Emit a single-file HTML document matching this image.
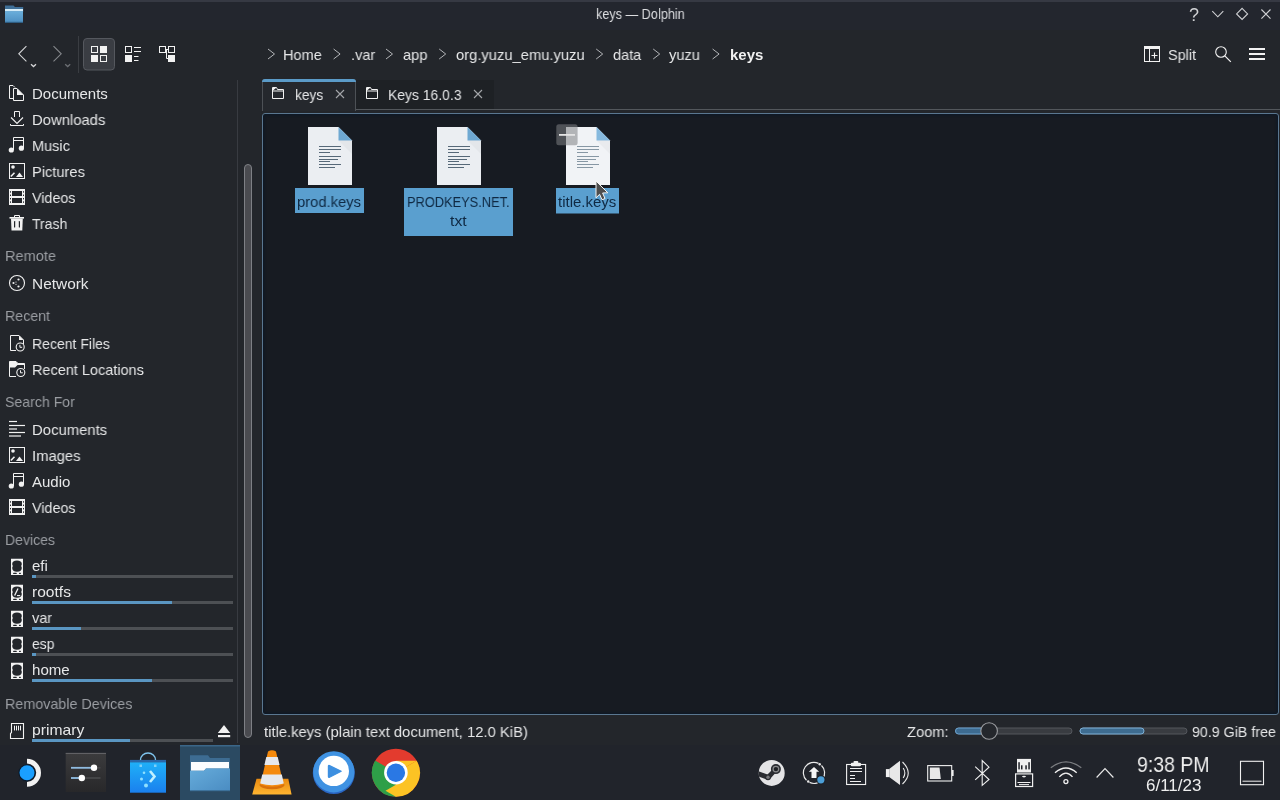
<!DOCTYPE html>
<html><head><meta charset="utf-8"><style>
*{margin:0;padding:0;box-sizing:border-box}
html,body{width:1280px;height:800px;overflow:hidden;background:#23262b;font-family:"Liberation Sans",sans-serif}
.a{position:absolute}
.t{position:absolute;white-space:nowrap;line-height:1;transform-origin:0 0;will-change:transform}
svg{position:absolute;overflow:visible}
.bar{position:absolute;left:32px;height:3px;background:#4d5054}
.bar i{position:absolute;left:0;top:0;height:3px;background:#5a96c2}
</style></head><body>
<div class="a" style="left:0;top:0;width:1280px;height:30px;background:#23262e"></div>
<div class="a" style="left:0;top:0;width:1280px;height:1.5px;background:#363943"></div>
<div class="t" style="left:595.50px;top:6.63px;font-size:14.5px;color:#dcdde0;transform:scaleX(0.8735);">keys — Dolphin</div>
<div class="t" style="left:32.10px;top:86.30px;font-size:15px;color:#e6e7e8;transform:scaleX(0.9941);">Documents</div>
<div class="t" style="left:32.10px;top:112.30px;font-size:15px;color:#e6e7e8;transform:scaleX(0.9892);">Downloads</div>
<div class="t" style="left:32.10px;top:138.30px;font-size:15px;color:#e6e7e8;transform:scaleX(0.9681);">Music</div>
<div class="t" style="left:32.10px;top:164.30px;font-size:15px;color:#e6e7e8;transform:scaleX(0.9760);">Pictures</div>
<div class="t" style="left:32.10px;top:190.30px;font-size:15px;color:#e6e7e8;transform:scaleX(0.9539);">Videos</div>
<div class="t" style="left:32.10px;top:216.30px;font-size:15px;color:#e6e7e8;transform:scaleX(0.9339);">Trash</div>
<div class="t" style="left:5.00px;top:248.30px;font-size:15px;color:#9a9da2;transform:scaleX(0.9695);">Remote</div>
<div class="t" style="left:32.10px;top:276.30px;font-size:15px;color:#e6e7e8;transform:scaleX(1.0282);">Network</div>
<div class="t" style="left:5.00px;top:308.30px;font-size:15px;color:#9a9da2;transform:scaleX(0.9464);">Recent</div>
<div class="t" style="left:32.10px;top:336.30px;font-size:15px;color:#e6e7e8;transform:scaleX(0.9346);">Recent Files</div>
<div class="t" style="left:32.10px;top:362.30px;font-size:15px;color:#e6e7e8;transform:scaleX(0.9646);">Recent Locations</div>
<div class="t" style="left:5.00px;top:394.30px;font-size:15px;color:#9a9da2;transform:scaleX(0.9407);">Search For</div>
<div class="t" style="left:32.10px;top:422.30px;font-size:15px;color:#e6e7e8;transform:scaleX(0.9914);">Documents</div>
<div class="t" style="left:32.10px;top:448.30px;font-size:15px;color:#e6e7e8;transform:scaleX(0.9858);">Images</div>
<div class="t" style="left:32.10px;top:474.30px;font-size:15px;color:#e6e7e8;transform:scaleX(0.9935);">Audio</div>
<div class="t" style="left:32.10px;top:500.30px;font-size:15px;color:#e6e7e8;transform:scaleX(0.9561);">Videos</div>
<div class="t" style="left:5.00px;top:532.30px;font-size:15px;color:#9a9da2;transform:scaleX(0.9372);">Devices</div>
<div class="t" style="left:32.10px;top:558.30px;font-size:15px;color:#e6e7e8;transform:scaleX(0.9779);">efi</div>
<div class="t" style="left:32.10px;top:584.30px;font-size:15px;color:#e6e7e8;transform:scaleX(1.0373);">rootfs</div>
<div class="t" style="left:32.10px;top:610.30px;font-size:15px;color:#e6e7e8;transform:scaleX(0.9688);">var</div>
<div class="t" style="left:32.10px;top:636.30px;font-size:15px;color:#e6e7e8;transform:scaleX(0.9298);">esp</div>
<div class="t" style="left:32.10px;top:662.30px;font-size:15px;color:#e6e7e8;transform:scaleX(1.0053);">home</div>
<div class="t" style="left:5.00px;top:696.30px;font-size:15px;color:#9a9da2;transform:scaleX(0.9550);">Removable Devices</div>
<div class="t" style="left:32.10px;top:722.30px;font-size:15px;color:#e6e7e8;transform:scaleX(1.0460);">primary</div>
<div class="a" style="left:237px;top:80px;width:1px;height:663px;background:#383b41"></div>
<div class="a" style="left:244px;top:164px;width:8px;height:574px;background:#4a4b50;border:1px solid #7e8085;border-radius:4px"></div>
<div class="bar" style="top:575px;width:201px"><i style="width:4px"></i></div>
<div class="bar" style="top:601px;width:201px"><i style="width:140px"></i></div>
<div class="bar" style="top:627px;width:201px"><i style="width:49px"></i></div>
<div class="bar" style="top:653px;width:201px"><i style="width:4px"></i></div>
<div class="bar" style="top:679px;width:201px"><i style="width:120px"></i></div>
<div class="bar" style="top:739px;width:181px"><i style="width:98px"></i></div>
<div class="t" style="left:283.00px;top:47.30px;font-size:15px;color:#e6e7e8;transform:scaleX(0.9675);">Home</div>
<div class="t" style="left:350.60px;top:47.30px;font-size:15px;color:#e6e7e8;transform:scaleX(0.9680);">.var</div>
<div class="t" style="left:402.50px;top:47.30px;font-size:15px;color:#e6e7e8;transform:scaleX(0.9741);">app</div>
<div class="t" style="left:455.50px;top:47.30px;font-size:15px;color:#e6e7e8;transform:scaleX(0.9832);">org.yuzu_emu.yuzu</div>
<div class="t" style="left:612.70px;top:47.30px;font-size:15px;color:#e6e7e8;transform:scaleX(0.9692);">data</div>
<div class="t" style="left:669.00px;top:47.30px;font-size:15px;color:#e6e7e8;transform:scaleX(0.9779);">yuzu</div>
<div class="t" style="left:730.00px;top:47.30px;font-size:15px;color:#f0f0f0;font-weight:bold;transform:scaleX(0.9895);">keys</div>
<div class="t" style="left:1167.50px;top:47.30px;font-size:15px;color:#e6e7e8;transform:scaleX(0.9623);">Split</div>
<div class="a" style="left:262px;top:79px;width:94px;height:32px;background:#25282d;border:1px solid #4d5156;border-bottom:none;border-radius:3px 3px 0 0"></div>
<div class="a" style="left:262px;top:79px;width:94px;height:3px;background:#5b9bc8;border-radius:3px 3px 0 0"></div>
<div class="a" style="left:356px;top:80px;width:138px;height:29px;background:#1e2125"></div>
<div class="a" style="left:356px;top:109px;width:924px;height:1px;background:#53575c"></div>
<div class="t" style="left:294.70px;top:87.30px;font-size:15px;color:#e6e7e8;transform:scaleX(0.9173);">keys</div>
<div class="t" style="left:388.00px;top:87.30px;font-size:15px;color:#e6e7e8;transform:scaleX(0.9280);">Keys 16.0.3</div>
<div class="a" style="left:262px;top:113px;width:1017px;height:602px;background:#171b22;border:1px solid #5a7790;border-radius:3px;box-shadow:inset 0 0 3px 1px #0c1826"></div>
<div class="t" style="left:263.70px;top:724.30px;font-size:15px;color:#e6e7e8;transform:scaleX(0.9858);">title.keys (plain text document, 12.0 KiB)</div>
<div class="t" style="left:906.80px;top:724.30px;font-size:15px;color:#e6e7e8;transform:scaleX(0.9812);">Zoom:</div>
<div class="t" style="left:1191.80px;top:724.30px;font-size:15px;color:#e6e7e8;transform:scaleX(0.9491);">90.9 GiB free</div>
<div class="a" style="left:0;top:745px;width:1280px;height:55px;background:#21242b"></div>
<div class="a" style="left:180px;top:746px;width:60px;height:54px;background:#2b4a62"></div>
<div class="t" style="left:1137.40px;top:754.25px;font-size:22.5px;color:#eeeeee;transform:scaleX(0.8663);">9:38 PM</div>
<div class="t" style="left:1145.50px;top:778.39px;font-size:15.6px;color:#eeeeee;transform:scaleX(1.0904);">6/11/23</div>
<svg width="1280" height="800" style="left:0;top:0"><path d="M13.5,98.5 H9.5 V85.5 H13 L15,87.5" fill="none" stroke="#f2f2f2"/><path d="M13.5,100.5 V88.5 H17 L23.5,95 V100.5 Z" fill="none" stroke="#f2f2f2"/><path d="M17,88.5 L23.5,95 H17 Z" fill="#f2f2f2"/><path d="M14.5,117 V111.5 H19.5 V117" fill="none" stroke="#f2f2f2"/><path d="M11,117.5 L17,123.5 L23,117.5" fill="none" stroke="#f2f2f2" stroke-width="1.1"/><path d="M10.5,124 V125.5 H23.5 V124" fill="none" stroke="#f2f2f2"/><path d="M13.5,150 V137.5 H23.5 V148" fill="none" stroke="#f2f2f2"/><path d="M13.5,140.5 H23.5" stroke="#f2f2f2"/><circle cx="11.3" cy="150" r="2.6" fill="#f2f2f2"/><circle cx="21.4" cy="148.2" r="2.6" fill="#f2f2f2"/><rect x="9.5" y="163.5" width="15" height="15" fill="none" stroke="#f2f2f2"/><circle cx="13" cy="167" r="1.8" fill="#f2f2f2"/><path d="M16,177 L19.5,172.5 L23,177 Z" fill="#f2f2f2"/><path d="M10.8,176.5 L14.5,172.8" stroke="#f2f2f2" stroke-width="1.6"/><path d="M9,189 H25 V205 H9 Z M12,191 V196 H22 V191 Z M12,198 V203 H22 V198 Z" fill="#f2f2f2" fill-rule="evenodd"/><rect x="10" y="191.2" width="1" height="1.4" fill="#23262b"/><rect x="23" y="191.2" width="1" height="1.4" fill="#23262b"/><rect x="10" y="194.6" width="1" height="1.4" fill="#23262b"/><rect x="23" y="194.6" width="1" height="1.4" fill="#23262b"/><rect x="10" y="198.0" width="1" height="1.4" fill="#23262b"/><rect x="23" y="198.0" width="1" height="1.4" fill="#23262b"/><rect x="10" y="201.4" width="1" height="1.4" fill="#23262b"/><rect x="23" y="201.4" width="1" height="1.4" fill="#23262b"/><path d="M14.5,217.5 V215.5 H19.5 V217.5" fill="none" stroke="#f2f2f2"/><rect x="9.5" y="217" width="14.5" height="1.6" fill="#f2f2f2"/><path d="M11,218.5 H22.8 L22.3,230.5 H11.5 Z" fill="#f2f2f2"/><rect x="14" y="221" width="1.2" height="6.5" rx=".6" fill="#23262b"/><rect x="18.8" y="221" width="1.2" height="6.5" rx=".6" fill="#23262b"/><circle cx="17" cy="283" r="7.5" fill="none" stroke="#f2f2f2" stroke-width="1.1"/><circle cx="18.5" cy="279.5" r="1.1" fill="#f2f2f2"/><circle cx="13.5" cy="283" r="1.1" fill="#f2f2f2"/><circle cx="18.5" cy="286.5" r="1.1" fill="#f2f2f2"/><circle cx="16" cy="282" r="0.6" fill="#f2f2f2"/><circle cx="16" cy="284.3" r="0.6" fill="#f2f2f2"/><path d="M16,350.5 H10.5 V335.5 H19 L23.5,340 V344" fill="none" stroke="#f2f2f2"/><path d="M19,335.5 L23.5,340 H19 Z" fill="#f2f2f2"/><circle cx="20.2" cy="347" r="4" fill="#23262b" stroke="#f2f2f2" stroke-width="1.1"/><path d="M19.9,344.8 V347.3 H22.2" fill="none" stroke="#f2f2f2" stroke-width="1"/><path d="M16,376.5 H9.5 V361.5 H16 L18,363.5 H24.5 V369" fill="none" stroke="#f2f2f2"/><path d="M9.5,361.5 H16 L18,363.5 H24.5 V365 H17.5 L15,367.5 H9.5 Z" fill="#f2f2f2"/><circle cx="20.8" cy="372.5" r="4" fill="#23262b" stroke="#f2f2f2" stroke-width="1.1"/><path d="M20.5,370.3 V372.8 H22.8" fill="none" stroke="#f2f2f2" stroke-width="1"/><path d="M9,421.5 H17" stroke="#f2f2f2" stroke-width="1.2"/><path d="M9,425.5 H25" stroke="#f2f2f2" stroke-width="1.2"/><path d="M9,429 H17" stroke="#f2f2f2" stroke-width="1.2"/><path d="M9,432.5 H25" stroke="#f2f2f2" stroke-width="1.2"/><path d="M9,436 H21" stroke="#f2f2f2" stroke-width="1.2"/><rect x="9.5" y="447.5" width="15" height="15" fill="none" stroke="#f2f2f2"/><circle cx="13" cy="451" r="1.8" fill="#f2f2f2"/><path d="M16,461 L19.5,456.5 L23,461 Z" fill="#f2f2f2"/><path d="M10.8,460.5 L14.5,456.8" stroke="#f2f2f2" stroke-width="1.6"/><path d="M13.5,486 V473.5 H23.5 V484" fill="none" stroke="#f2f2f2"/><path d="M13.5,476.5 H23.5" stroke="#f2f2f2"/><circle cx="11.3" cy="486" r="2.6" fill="#f2f2f2"/><circle cx="21.4" cy="484.2" r="2.6" fill="#f2f2f2"/><path d="M9,499 H25 V515 H9 Z M12,501 V506 H22 V501 Z M12,508 V513 H22 V508 Z" fill="#f2f2f2" fill-rule="evenodd"/><rect x="10" y="501.2" width="1" height="1.4" fill="#23262b"/><rect x="23" y="501.2" width="1" height="1.4" fill="#23262b"/><rect x="10" y="504.6" width="1" height="1.4" fill="#23262b"/><rect x="23" y="504.6" width="1" height="1.4" fill="#23262b"/><rect x="10" y="508.0" width="1" height="1.4" fill="#23262b"/><rect x="23" y="508.0" width="1" height="1.4" fill="#23262b"/><rect x="10" y="511.4" width="1" height="1.4" fill="#23262b"/><rect x="23" y="511.4" width="1" height="1.4" fill="#23262b"/><path d="M11,558.7 H23 V575 H11 Z M12.2,564 Q12.2,560.5 17,560.5 Q21.8,560.5 21.8,564 Q21.8,565 21.1,566 Q21.8,567 21.8,568 Q21.8,571.7 17,571.7 Q12.2,571.7 12.2,568 Q12.2,567 12.9,566 Q12.2,565 12.2,564 Z" fill="#f2f2f2" fill-rule="evenodd"/><rect x="13.1" y="572.8" width="3.7" height="1.2" rx=".6" fill="#23262b"/><rect x="19" y="572.8" width="1.9" height="1.2" rx=".6" fill="#23262b"/><path d="M11,584.7 H23 V601 H11 Z M12.2,590 Q12.2,586.5 17,586.5 Q21.8,586.5 21.8,590 Q21.8,591 21.1,592 Q21.8,593 21.8,594 Q21.8,597.7 17,597.7 Q12.2,597.7 12.2,594 Q12.2,593 12.9,592 Q12.2,591 12.2,590 Z" fill="#f2f2f2" fill-rule="evenodd"/><rect x="13.1" y="598.8" width="3.7" height="1.2" rx=".6" fill="#23262b"/><rect x="19" y="598.8" width="1.9" height="1.2" rx=".6" fill="#23262b"/><path d="M14.6,595.5 L18,588.5" stroke="#f2f2f2" stroke-width="1.3"/><path d="M17,595.6 H20.2" stroke="#f2f2f2" stroke-width="1.1"/><path d="M11,610.7 H23 V627 H11 Z M12.2,616 Q12.2,612.5 17,612.5 Q21.8,612.5 21.8,616 Q21.8,617 21.1,618 Q21.8,619 21.8,620 Q21.8,623.7 17,623.7 Q12.2,623.7 12.2,620 Q12.2,619 12.9,618 Q12.2,617 12.2,616 Z" fill="#f2f2f2" fill-rule="evenodd"/><rect x="13.1" y="624.8" width="3.7" height="1.2" rx=".6" fill="#23262b"/><rect x="19" y="624.8" width="1.9" height="1.2" rx=".6" fill="#23262b"/><path d="M11,636.7 H23 V653 H11 Z M12.2,642 Q12.2,638.5 17,638.5 Q21.8,638.5 21.8,642 Q21.8,643 21.1,644 Q21.8,645 21.8,646 Q21.8,649.7 17,649.7 Q12.2,649.7 12.2,646 Q12.2,645 12.9,644 Q12.2,643 12.2,642 Z" fill="#f2f2f2" fill-rule="evenodd"/><rect x="13.1" y="650.8" width="3.7" height="1.2" rx=".6" fill="#23262b"/><rect x="19" y="650.8" width="1.9" height="1.2" rx=".6" fill="#23262b"/><path d="M11,662.7 H23 V679 H11 Z M12.2,668 Q12.2,664.5 17,664.5 Q21.8,664.5 21.8,668 Q21.8,669 21.1,670 Q21.8,671 21.8,672 Q21.8,675.7 17,675.7 Q12.2,675.7 12.2,672 Q12.2,671 12.9,670 Q12.2,669 12.2,668 Z" fill="#f2f2f2" fill-rule="evenodd"/><rect x="13.1" y="676.8" width="3.7" height="1.2" rx=".6" fill="#23262b"/><rect x="19" y="676.8" width="1.9" height="1.2" rx=".6" fill="#23262b"/><path d="M11.5,723.5 H23.5 V738.5 H10.5 V733.5 L11.5,732.5 Z" fill="none" stroke="#f2f2f2" stroke-width="1.1"/><rect x="14.0" y="725.5" width="1" height="5" rx=".5" fill="#f2f2f2"/><rect x="16.0" y="725.5" width="1" height="5" rx=".5" fill="#f2f2f2"/><rect x="18.0" y="725.5" width="1" height="5" rx=".5" fill="#f2f2f2"/><rect x="20.0" y="725.5" width="1" height="5" rx=".5" fill="#f2f2f2"/><path d="M224,725 L230.2,733 H217.8 Z" fill="#f2f2f2"/><rect x="218" y="735" width="12.2" height="2.2" fill="#f2f2f2"/></svg>
<svg width="1280" height="800" style="left:0;top:0"><path d="M26.4,46.1 L18.8,53.8 L26.4,61.4" fill="none" stroke="#d4d5d7" stroke-width="1.1"/><path d="M31,64.2 L33.5,66.5 L36,64.2" fill="none" stroke="#d4d5d7" stroke-width="1.3"/><path d="M53.5,46.1 L61.2,53.8 L53.5,61.4" fill="none" stroke="#84878b" stroke-width="1.1"/><path d="M65.2,64.2 L67.7,66.5 L70.2,64.2" fill="none" stroke="#6c6f74" stroke-width="1.3"/><rect x="78" y="36" width="1" height="37" fill="#3a3d42"/><rect x="83.5" y="38.5" width="31" height="31.5" rx="3.5" fill="#3a3d43" stroke="#55585e" stroke-width="1"/><rect x="91.5" y="46.5" width="6" height="6" fill="none" stroke="#f2f2f2"/><rect x="100" y="46" width="7" height="7" fill="#f2f2f2"/><rect x="91" y="55" width="7" height="7" fill="#f2f2f2"/><rect x="100.5" y="55.5" width="6" height="6" fill="none" stroke="#f2f2f2"/><rect x="125.5" y="46.5" width="6" height="6" fill="none" stroke="#f2f2f2"/><rect x="125" y="55" width="7" height="7" fill="#f2f2f2"/><path d="M134,47.5 H141 M134,51.5 H141 M134,56.5 H138.5 M134,60.5 H138.5" stroke="#f2f2f2" stroke-width="1.1"/><rect x="159.5" y="46.5" width="6" height="6" fill="none" stroke="#f2f2f2"/><rect x="168.5" y="46.5" width="6" height="6" fill="none" stroke="#f2f2f2"/><path d="M166,49.5 H168 M166.5,49.5 V58.5 H168" fill="none" stroke="#f2f2f2"/><rect x="168" y="55" width="7" height="7" fill="#f2f2f2"/><path d="M268,49 L274.5,54 L268,59" fill="none" stroke="#b4b6b9" stroke-width="1"/><path d="M333.6,49 L340.1,54 L333.6,59" fill="none" stroke="#b4b6b9" stroke-width="1"/><path d="M386,49 L392.5,54 L386,59" fill="none" stroke="#b4b6b9" stroke-width="1"/><path d="M439.2,49 L445.7,54 L439.2,59" fill="none" stroke="#b4b6b9" stroke-width="1"/><path d="M596.2,49 L602.7,54 L596.2,59" fill="none" stroke="#b4b6b9" stroke-width="1"/><path d="M653.2,49 L659.7,54 L653.2,59" fill="none" stroke="#b4b6b9" stroke-width="1"/><path d="M712.6,49 L719.1,54 L712.6,59" fill="none" stroke="#b4b6b9" stroke-width="1"/><rect x="1144.5" y="46.5" width="15" height="15" fill="none" stroke="#f2f2f2"/><rect x="1144" y="46" width="16" height="3" fill="#f2f2f2"/><path d="M1149.5,49 V62" stroke="#f2f2f2"/><path d="M1151.5,55.5 H1157.5 M1154.5,52.5 V58.5" stroke="#f2f2f2" stroke-width="1.1"/><circle cx="1221" cy="52" r="5.3" fill="none" stroke="#f2f2f2" stroke-width="1.1"/><path d="M1224.8,55.8 L1230.8,61.8" stroke="#f2f2f2" stroke-width="1.2"/><rect x="1249" y="48" width="16" height="2" fill="#f2f2f2"/><rect x="1249" y="53" width="16" height="2" fill="#f2f2f2"/><rect x="1249" y="58" width="16" height="2" fill="#f2f2f2"/><text x="1189" y="20.8" font-family="Liberation Sans" font-size="18" fill="#d0d1d4">?</text><path d="M1212.3,11.2 L1217.8,16.8 L1223.3,11.2" fill="none" stroke="#d0d1d4" stroke-width="1.1"/><path d="M1242.1,8.4 L1247.6,13.9 L1242.1,19.4 L1236.6,13.9 Z" fill="none" stroke="#d0d1d4" stroke-width="1.1"/><path d="M1261.4,9.5 L1270.5,18.6 M1270.5,9.5 L1261.4,18.6" fill="none" stroke="#d0d1d4" stroke-width="1.1"/><path d="M272.5,98.5 V87.5 H276.5 L277.5,89.5 H283.5 V98.5 Z" fill="none" stroke="#f2f2f2"/><path d="M272.5,91 H283.5" stroke="#f2f2f2"/><path d="M273,88 H276 L273,90.5 Z" fill="#f2f2f2"/><path d="M366.5,98.5 V87.5 H370.5 L371.5,89.5 H377.5 V98.5 Z" fill="none" stroke="#f2f2f2"/><path d="M366.5,91 H377.5" stroke="#f2f2f2"/><path d="M367,88 H370 L367,90.5 Z" fill="#f2f2f2"/><path d="M336,90 L344,98 M344,90 L336,98" stroke="#a4a6aa" stroke-width="1.1"/><path d="M474,90 L482,98 M482,90 L474,98" stroke="#a4a6aa" stroke-width="1.1"/></svg>
<svg width="1280" height="800" style="left:0;top:0"><defs><linearGradient id="fb" x1="0" y1="0" x2="0" y2="1"><stop offset="0" stop-color="#6aaedb"/><stop offset="1" stop-color="#4d8fc2"/></linearGradient><linearGradient id="pg" x1="0" y1="0" x2="1" y2="1"><stop offset="0" stop-color="#eef1f4"/><stop offset="1" stop-color="#e3e8ed"/></linearGradient></defs><path d="M5,5.6 H13.5 L15,7 H23.2 V12 H5 Z" fill="#3f6f98"/><rect x="5" y="9" width="18" height="2.4" fill="#d5ecf8"/><rect x="5" y="11.2" width="18" height="11.3" fill="url(#fb)"/><rect x="5" y="21.8" width="18" height="1" fill="#2f5f88"/><path d="M308,127 H338.5 L352,140.5 V185 H308 Z" fill="#ebeef2"/><path d="M338.5,127 L352,140.5 H338.5 Z" fill="#6ea8d2"/><path d="M338.5,140.5 H352 V154 Z" fill="#000" opacity=".03"/><rect x="319" y="146" width="22" height="1" fill="#566878"/><rect x="319" y="149" width="22" height="1" fill="#566878"/><rect x="319" y="152" width="11" height="1" fill="#566878"/><rect x="319" y="156" width="22" height="1" fill="#566878"/><rect x="319" y="159" width="19" height="1" fill="#566878"/><rect x="319" y="161" width="11" height="1" fill="#566878"/><rect x="319" y="164" width="22" height="1" fill="#566878"/><rect x="319" y="167" width="16" height="1" fill="#566878"/><path d="M437,127 H467.5 L481,140.5 V185 H437 Z" fill="#ebeef2"/><path d="M467.5,127 L481,140.5 H467.5 Z" fill="#6ea8d2"/><path d="M467.5,140.5 H481 V154 Z" fill="#000" opacity=".03"/><rect x="448" y="146" width="22" height="1" fill="#566878"/><rect x="448" y="149" width="22" height="1" fill="#566878"/><rect x="448" y="152" width="11" height="1" fill="#566878"/><rect x="448" y="156" width="22" height="1" fill="#566878"/><rect x="448" y="159" width="19" height="1" fill="#566878"/><rect x="448" y="161" width="11" height="1" fill="#566878"/><rect x="448" y="164" width="22" height="1" fill="#566878"/><rect x="448" y="167" width="16" height="1" fill="#566878"/><path d="M566,127 H596.5 L610,140.5 V185 H566 Z" fill="#f1f3f6"/><path d="M596.5,127 L610,140.5 H596.5 Z" fill="#86b9de"/><path d="M596.5,140.5 H610 V154 Z" fill="#000" opacity=".03"/><rect x="577" y="146" width="22" height="1" fill="#8797a4"/><rect x="577" y="149" width="22" height="1" fill="#8797a4"/><rect x="577" y="152" width="11" height="1" fill="#8797a4"/><rect x="577" y="156" width="22" height="1" fill="#8797a4"/><rect x="577" y="159" width="19" height="1" fill="#8797a4"/><rect x="577" y="161" width="11" height="1" fill="#8797a4"/><rect x="577" y="164" width="22" height="1" fill="#8797a4"/><rect x="577" y="167" width="16" height="1" fill="#8797a4"/><rect x="295" y="188" width="69" height="25" fill="#5a9fcf"/><rect x="404" y="188" width="109" height="48" fill="#5a9fcf"/><rect x="556" y="188" width="63" height="25.5" fill="#5a9fcf"/></svg>
<div class="t" style="left:297.20px;top:193.60px;font-size:15px;color:#0f2943;transform:scaleX(0.9839);">prod.keys</div>
<div class="t" style="left:407.30px;top:193.50px;font-size:15px;color:#0f2943;transform:scaleX(0.8555);">PRODKEYS.NET.</div>
<div class="t" style="left:450.00px;top:213.20px;font-size:15px;color:#0f2943;transform:scaleX(1.0536);">txt</div>
<div class="t" style="left:558.30px;top:193.60px;font-size:15px;color:#0f2943;">title.keys</div>
<svg width="1280" height="800" style="left:0;top:0"><defs><linearGradient id="sq" x1="0" y1="0" x2="0" y2="1"><stop offset="0" stop-color="#3b3b3d"/><stop offset="1" stop-color="#28282a"/></linearGradient><linearGradient id="bag" x1="0" y1="0" x2="0" y2="1"><stop offset="0" stop-color="#1fb0f8"/><stop offset="1" stop-color="#1a80ee"/></linearGradient><linearGradient id="fold" x1="0" y1="0" x2="1" y2="1"><stop offset="0" stop-color="#66acdb"/><stop offset="1" stop-color="#4a8cc2"/></linearGradient><linearGradient id="vbase" x1="0" y1="0" x2="0" y2="1"><stop offset="0" stop-color="#e98a10"/><stop offset="1" stop-color="#ffb531"/></linearGradient></defs><rect x="556.3" y="124.3" width="21.3" height="21" rx="2.5" fill="rgb(125,127,132)" fill-opacity=".55"/><rect x="559" y="134" width="16" height="1.8" fill="#e4e4e4"/><path d="M596,181 L607.8,192.8 L602.6,193 L605,198.5 L602,199.8 L599.6,194.3 L596,197.8 Z" fill="#4d4d4d" stroke="#f5f5f5" stroke-width="1" stroke-linejoin="round"/><rect x="955.5" y="728" width="116.5" height="6" rx="3" fill="#393c41" stroke="#54575c" stroke-width="1"/><rect x="955.5" y="728" width="36" height="6" rx="3" fill="#3d6b90" stroke="#6ba3cf" stroke-width="1"/><circle cx="989.1" cy="731" r="8.3" fill="#24272c" stroke="#9b9da1" stroke-width="1.1"/><rect x="1080" y="728" width="107" height="6" rx="3" fill="#393c41" stroke="#54575c" stroke-width="1"/><rect x="1080" y="728" width="64" height="6" rx="3" fill="#3e6c90" stroke="#7db0d6" stroke-width="1"/><rect x="180" y="745" width="60" height="1.5" fill="#3b6688"/><circle cx="27" cy="772.8" r="8.6" fill="#0b1a2c"/><circle cx="27" cy="772.8" r="7.5" fill="#1a9fff"/><path d="M27,758.8 A14,14 0 0 1 27,786.8 V782 A9.2,9.2 0 0 0 27,763.6 Z" fill="#f2f2f2"/><rect x="65.7" y="752.9" width="40.3" height="39.1" fill="url(#sq)"/><rect x="65.7" y="752.9" width="40.3" height="1" fill="#66676a"/><rect x="71" y="767" width="29.5" height="1.6" fill="#444548"/><rect x="71" y="766.9" width="23" height="1.8" fill="#8fbbe0"/><circle cx="94" cy="767.8" r="3.2" fill="#fff"/><rect x="71" y="777.2" width="29.5" height="1.6" fill="#4a4b4e"/><rect x="71" y="777.1" width="11" height="1.8" fill="#8fbbe0"/><circle cx="81.8" cy="778" r="3.2" fill="#fff"/><path d="M140.5,762 V760 A7.5,7 0 0 1 155.5,760 V762" fill="none" stroke="#7fc4ee" stroke-width="1.4"/><rect x="130" y="759.9" width="36" height="3" fill="#2a66a8"/><rect x="130" y="762.4" width="36" height="30.3" fill="url(#bag)"/><rect x="139.5" y="764.5" width="2.5" height="2.5" fill="#7fd0f8"/><rect x="154" y="764.5" width="2.5" height="2.5" fill="#7fd0f8"/><circle cx="144" cy="772.7" r="1.3" fill="#8fe0ff"/><circle cx="141.5" cy="779" r="1.5" fill="#8fe0ff"/><circle cx="146" cy="785.5" r="2" fill="#8fe0ff"/><path d="M150,771 L154.5,776.5 L150,782" fill="none" stroke="#bff0ff" stroke-width="2.6"/><path d="M190,755.2 H208 L210,758 H229.8 V791 H190 Z" fill="#3d6c92"/><path d="M191,762 H229 V768.6 H206 L204,770.8 H191 Z" fill="#fbfdff"/><path d="M190,770.8 H204 L206,768.6 H230 V791 H190 Z" fill="url(#fold)"/><rect x="190" y="790.2" width="40" height="1" fill="#3a6a90"/><path d="M256.5,778.8 H288.3 L291.6,794.4 H252.2 Z" fill="url(#vbase)"/><ellipse cx="272" cy="785" rx="12.5" ry="4.2" fill="#d9700a"/><path d="M268,751.5 Q272,748.8 276,751.5 L283.5,784.5 Q272,789 260.5,784.5 Z" fill="#f58a0d"/><path d="M266.3,757 H277.7 L279.6,765 H264.4 Z" fill="#e6e8ec"/><path d="M262.2,774.6 H281.8 L283.8,783.5 Q272,787 260.2,783.5 Z" fill="#e6e8ec"/><circle cx="333.8" cy="773" r="21" fill="#2a66c4"/><circle cx="333.8" cy="771.8" r="20.6" fill="#3f92e2"/><circle cx="333.8" cy="770.9" r="15.2" fill="#ffffff"/><path d="M329.5,765.5 L341.2,771.3 L329.5,777.2 Q328.4,777.8 328.4,776.5 V766.2 Q328.4,765 329.5,765.5 Z" fill="#3d8fe0" stroke="#3d8fe0" stroke-width="1.2" stroke-linejoin="round"/><circle cx="395.9" cy="772.7" r="24" fill="#e33b2e"/><path d="M395.9,772.7 L375.1,760.7 A24,24 0 0 0 395.9,796.7 Z" fill="#2e9f48"/><path d="M395.9,772.7 L416.7,760.7 A24,24 0 0 1 395.9,796.7 Z" fill="#fcc324"/><path d="M375.1,760.7 L395.9,772.7 L385.5,790.7 Z" fill="#2e9f48"/><path d="M416.7,760.7 L395.9,760.7 L395.9,772.7 Z" fill="#fcc324"/><path d="M395.9,796.7 L385.5,790.7 L406.3,778.7 Z" fill="#fcc324"/><circle cx="395.9" cy="772.7" r="11.8" fill="#fff"/><circle cx="395.9" cy="772.7" r="9.2" fill="#2a78e4"/><circle cx="771.7" cy="772.9" r="13" fill="#e4e4e6"/><path d="M758.4,771.2 L767.5,774.6 L774.2,767.8 L777.6,770.4 L770.5,778.4 Q768.5,780.3 766,779.2 L759.2,776.8 Z" fill="#2a2c31"/><circle cx="775.9" cy="769.1" r="5" fill="#2a2c31"/><circle cx="775.9" cy="769.1" r="3.4" fill="#8a8b8e"/><circle cx="775.9" cy="769.1" r="2.2" fill="#1e2024"/><circle cx="768" cy="777.3" r="2.9" fill="#2a2c31"/><circle cx="768" cy="777.3" r="1.7" fill="#77787b"/><path d="M818.5,763.4 A10.5,10.5 0 0 0 806.5,780.3" fill="none" stroke="#eaeaea" stroke-width="1.2"/><path d="M809.5,782.4 A10.5,10.5 0 0 0 821.5,765.5" fill="none" stroke="#eaeaea" stroke-width="1.2"/><circle cx="819.7" cy="764.3" r="1.2" fill="#eaeaea"/><circle cx="808.2" cy="781.5" r="1.2" fill="#eaeaea"/><path d="M814,767 L819.2,771.8 H816.5 V778 H811.5 V771.8 H808.8 Z" fill="#f5f5f5"/><circle cx="820.9" cy="779.8" r="4.6" fill="#1b1e24"/><circle cx="820.9" cy="779.8" r="3.6" fill="#4c9fd8"/><rect x="846.6" y="764.5" width="19" height="20" fill="none" stroke="#f0f0f0" stroke-width="1.1"/><rect x="850.8" y="762.8" width="10.2" height="3.4" rx="1.2" fill="#f0f0f0"/><rect x="853.5" y="760.9" width="4.8" height="2.5" rx="1" fill="#f0f0f0"/><path d="M850,768.5 H862 M850,771.5 H862 M850,775.5 H855 M850,778.5 H855 M850,781.5 H861" stroke="#f0f0f0" stroke-width="1"/><rect x="885.9" y="769.1" width="3.3" height="8" fill="#f0f0f0"/><path d="M889.2,769.1 L900,760.7 V785 L889.2,777.1 Z" fill="#e8e8e8"/><path d="M903.2,768 Q906.5,773 903.2,778" fill="none" stroke="#e8e8e8" stroke-width="1.1"/><path d="M902.5,762 Q914,773 902.5,784" fill="none" stroke="#e8e8e8" stroke-width="1.1"/><rect x="927.7" y="765.6" width="24" height="15.4" fill="none" stroke="#f0f0f0" stroke-width="1.1"/><rect x="952" y="770" width="1.6" height="6" fill="#f0f0f0"/><path d="M929.8,767.6 H939.5 L940.8,779 H929.8 Z" fill="#e8e8e8"/><path d="M975.2,766.6 L989,779.5 L982.2,785.3 V760.6 L989,767.2 L975.2,779.9" fill="none" stroke="#f0f0f0" stroke-width="1.1"/><rect x="1017" y="758.9" width="14" height="13.6" fill="#f0f0f0"/><rect x="1018.3" y="762.2" width="1.5" height="7.2" fill="#1f2228"/><rect x="1028.3" y="762.2" width="1.5" height="7.2" fill="#1f2228"/><rect x="1021" y="765.3" width="1.5" height="4.1" fill="#1f2228"/><rect x="1025.3" y="765.3" width="1.5" height="4.1" fill="#1f2228"/><rect x="1015.6" y="773.9" width="17" height="12.6" fill="none" stroke="#f0f0f0" stroke-width="1.2"/><ellipse cx="1024" cy="776.6" rx="2" ry=".8" fill="#f0f0f0"/><path d="M1017.5,782.5 H1030.5 M1019,784.6 H1029" stroke="#f0f0f0" stroke-width="1"/><path d="M1050.8,767.8 Q1066,756 1081.3,767.8" fill="none" stroke="#7b7d81" stroke-width="1.3"/><path d="M1055,772.7 Q1066,763.2 1076.7,772.7" fill="none" stroke="#f0f0f0" stroke-width="1.4"/><path d="M1059.3,776.9 Q1066,769.4 1072.5,776.9" fill="none" stroke="#f0f0f0" stroke-width="1.4"/><circle cx="1065.9" cy="781.6" r="2" fill="none" stroke="#f0f0f0" stroke-width="1.3"/><path d="M1096.6,777.5 L1105,768.6 L1113.4,777.5" fill="none" stroke="#e8e8e8" stroke-width="1.2"/><rect x="1240.5" y="761.3" width="23" height="23.4" fill="none" stroke="#f0f0f0" stroke-width="1.1"/><path d="M1242.5,781.2 H1261.5" stroke="#f0f0f0" stroke-width="1"/></svg>
</body></html>
